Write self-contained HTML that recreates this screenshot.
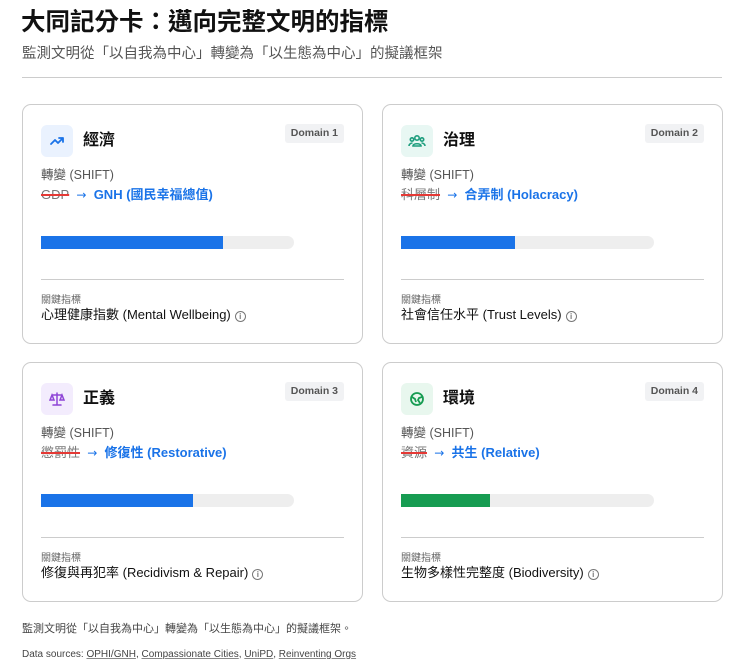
<!DOCTYPE html>
<html><head><meta charset="utf-8"><style>
*{margin:0;padding:0;box-sizing:border-box}
body{width:740px;height:670px;background:#fff;font-family:"Liberation Sans","Noto Sans CJK TC",sans-serif;color:#1a1a1a;position:relative;overflow:hidden}
.a{position:absolute;white-space:nowrap}
h1{position:absolute;left:21px;top:8px;font-size:24.5px;font-weight:700;line-height:30px;color:#111}
.sub{left:22px;top:44px;font-size:14.5px;color:#555;line-height:20px}
.hr{position:absolute;left:22px;top:77px;width:700px;height:1px;background:#ccc}
.card{position:absolute;width:341px;height:240px;border:1px solid #ccc;border-radius:9px;background:#fff}
.ic{position:absolute;left:18px;top:20px;width:32px;height:32px;border-radius:6px;display:flex;align-items:center;justify-content:center}
.t{left:60px;top:25px;font-size:16px;font-weight:700;line-height:22px;color:#111}
.badge{position:absolute;right:18px;top:19px;height:19px;padding:0 6px;background:#f1f2f4;border-radius:3px;font-size:10.5px;font-weight:700;color:#555;line-height:19px}
.lab{left:18px;top:61px;font-size:12.5px;color:#555;line-height:18px}
.sh{left:18px;top:81px;font-size:13px;line-height:18px;font-weight:700;color:#1a73e8}
.sh s{font-weight:400;color:#777;text-decoration-color:#e53935;text-decoration-thickness:1.5px}
.sh b{font-family:"DejaVu Sans",sans-serif;font-weight:400;font-size:12px}
.bar{position:absolute;left:18px;top:131px;width:253px;height:13px;background:#eee;border-radius:0 7px 7px 0}
.bar i{display:block;height:13px}
.div{position:absolute;left:18px;top:174px;width:303px;height:1px;background:#ccc}
.kl{left:18px;top:189px;font-size:10px;color:#666;line-height:14px}
.m{left:18px;top:201px;font-size:13px;color:#111;line-height:18px}
.info{display:inline-block;width:11px;height:11px;border:1px solid #777;border-radius:50%;font-size:8px;line-height:9px;text-align:center;color:#777;vertical-align:0px;margin-left:4px;font-weight:700}
.f1{left:22px;top:621px;font-size:11px;color:#444;line-height:16px}
.f2{left:22px;top:647px;font-size:10px;color:#444;line-height:16px}
.f2 u{text-decoration-color:#888}
</style></head><body>
<h1>大同記分卡：邁向完整文明的指標</h1>
<div class="a sub">監測文明從「以自我為中心」轉變為「以生態為中心」的擬議框架</div>
<div class="hr"></div>

<div class="card" style="left:22px;top:104px">
<div class="ic" style="background:#eaf2fe"><svg width="16" height="16" viewBox="0 0 16 16" fill="none" stroke="#1a73e8" stroke-width="1.8" stroke-linecap="round" stroke-linejoin="round"><path d="M2 11l4-4 3 3 5-5M10 5h4v4"/></svg></div>
<div class="a t">經濟</div><div class="badge">Domain 1</div>
<div class="a lab">轉變 (SHIFT)</div>
<div class="a sh"><s>GDP</s> &nbsp;<b>→</b>&nbsp; GNH (國民幸福總值)</div>
<div class="bar"><i style="width:182px;background:#1a73e8"></i></div>
<div class="div"></div>
<div class="a kl">關鍵指標</div>
<div class="a m">心理健康指數 (Mental Wellbeing)<span class="info">i</span></div>
</div>

<div class="card" style="left:382px;top:104px">
<div class="ic" style="background:#e8f7f3"><svg width="18" height="16" viewBox="0 0 18 16" fill="none" stroke="#1e9e7e" stroke-width="1.6"><circle cx="9" cy="5" r="2.2"/><circle cx="4" cy="6.5" r="1.7"/><circle cx="14" cy="6.5" r="1.7"/><path d="M5 13c0-3 8-3 8 0zM1 13c0-2 2-3 3.5-3M17 13c0-2-2-3-3.5-3"/></svg></div>
<div class="a t">治理</div><div class="badge">Domain 2</div>
<div class="a lab">轉變 (SHIFT)</div>
<div class="a sh"><s>科層制</s> &nbsp;<b>→</b>&nbsp; 合弄制 (Holacracy)</div>
<div class="bar"><i style="width:114px;background:#1a73e8"></i></div>
<div class="div"></div>
<div class="a kl">關鍵指標</div>
<div class="a m">社會信任水平 (Trust Levels)<span class="info">i</span></div>
</div>

<div class="card" style="left:22px;top:362px">
<div class="ic" style="background:#f3ecfd"><svg width="16" height="16" viewBox="0 0 16 16" fill="none" stroke="#8e44d6" stroke-width="1.5" stroke-linecap="round"><path d="M8 2v12M4 14h8M3 4h10M3 4l-2 5h4zM13 4l-2 5h4z"/></svg></div>
<div class="a t">正義</div><div class="badge">Domain 3</div>
<div class="a lab">轉變 (SHIFT)</div>
<div class="a sh"><s>懲罰性</s> &nbsp;<b>→</b>&nbsp; 修復性 (Restorative)</div>
<div class="bar"><i style="width:152px;background:#1a73e8"></i></div>
<div class="div"></div>
<div class="a kl">關鍵指標</div>
<div class="a m">修復與再犯率 (Recidivism &amp; Repair)<span class="info">i</span></div>
</div>

<div class="card" style="left:382px;top:362px">
<div class="ic" style="background:#e8f7ee"><svg width="16" height="16" viewBox="0 0 16 16" fill="none" stroke="#179c52" stroke-width="1.8"><circle cx="8" cy="8" r="6"/><path d="M3 6l3 2 1 3M13 6l-3 1-1 2 2 3"/></svg></div>
<div class="a t">環境</div><div class="badge">Domain 4</div>
<div class="a lab">轉變 (SHIFT)</div>
<div class="a sh"><s>資源</s> &nbsp;<b>→</b>&nbsp; 共生 (Relative)</div>
<div class="bar"><i style="width:89px;background:#179c52"></i></div>
<div class="div"></div>
<div class="a kl">關鍵指標</div>
<div class="a m">生物多樣性完整度 (Biodiversity)<span class="info">i</span></div>
</div>

<div class="a f1">監測文明從「以自我為中心」轉變為「以生態為中心」的擬議框架。</div>
<div class="a f2">Data sources: <u>OPHI/GNH</u>, <u>Compassionate Cities</u>, <u>UniPD</u>, <u>Reinventing Orgs</u></div>
</body></html>
